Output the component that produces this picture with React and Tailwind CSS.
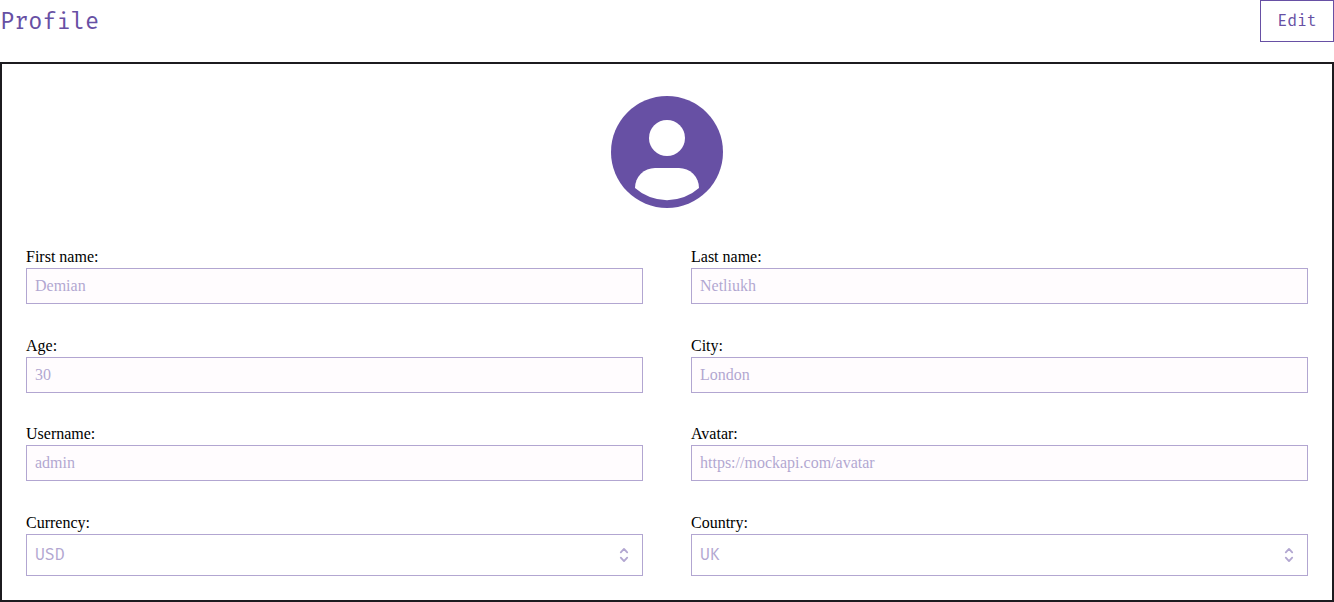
const fields = [
  { id: 'firstName', label: 'First name:', value: 'Demian' },
  { id: 'lastName', label: 'Last name:', value: 'Netliukh' },
  { id: 'age', label: 'Age:', value: '30' },
  { id: 'city', label: 'City:', value: 'London' },
  { id: 'username', label: 'Username:', value: 'admin' },
  { id: 'avatar', label: 'Avatar:', value: 'https://mockapi.com/avatar' },
];

const selects = [
  { id: 'currency', label: 'Currency:', value: 'USD', options: ['USD', 'EUR', 'GBP'] },
  { id: 'country', label: 'Country:', value: 'UK', options: ['UK', 'USA', 'Ukraine'] },
];

function TextField({ id, label, value }) {
  return (
    <div className="flex flex-col gap-0.5">
      <label htmlFor={id} className="leading-[18px]">{label}</label>
      <input
        id={id}
        type="text"
        defaultValue={value}
        disabled
        className="h-9 w-full border border-[#6750a4] bg-[#fffbfe] px-2 text-[#6750a4] opacity-50"
      />
    </div>
  );
}

function SelectField({ id, label, value, options }) {
  return (
    <div className="flex flex-col gap-0.5">
      <label htmlFor={id} className="leading-[18px]">{label}</label>
      <div className="relative text-[#6750a4] opacity-50">
        <select
          id={id}
          defaultValue={value}
          disabled
          className="block h-[42px] w-full appearance-none border border-[#6750a4] bg-transparent px-2 font-['Fira_Code','Fira_Mono','Liberation_Mono',monospace] opacity-100"
        >
          {options.map((option) => (
            <option key={option}>{option}</option>
          ))}
        </select>
        <svg
          viewBox="0 0 20 20"
          fill="none"
          stroke="currentColor"
          strokeWidth="1.8"
          strokeLinecap="round"
          strokeLinejoin="round"
          aria-hidden="true"
          className="pointer-events-none absolute inset-y-0 right-[9px] my-auto size-5"
        >
          <path d="M6.8 7.3 10 3.9l3.2 3.4M13.2 12.7 10 16.1l-3.2-3.4" />
        </svg>
      </div>
    </div>
  );
}

export default function App() {
  return (
    <div className="flex min-h-screen flex-col gap-5 bg-white font-['Liberation_Serif',serif] text-base text-black">
      <header className="flex items-start justify-between font-['Fira_Code','Fira_Mono','Liberation_Mono',monospace] text-[#6750a4]">
        <h1 className="pt-1.5 text-[23px] leading-8">Profile</h1>
        <button type="button" className="h-[42px] min-w-[74px] border border-[#6750a4] px-4">
          Edit
        </button>
      </header>
      <main className="flex flex-1 flex-col gap-10 border-2 border-[#1c1b1f] px-6 pt-8 pb-6">
        <svg viewBox="0 0 112 112" role="img" aria-label="User avatar" className="size-28 self-center">
          <circle cx="56" cy="56" r="56" fill="#6750a4" />
          <circle cx="56" cy="42" r="18" fill="#fff" />
          <path d="M24 92A20 20 0 0 1 44 72H68A20 20 0 0 1 88 92A48 48 0 0 1 24 92Z" fill="#fff" />
        </svg>
        <form className="grid flex-1 grid-cols-2 content-between gap-x-12 gap-y-8">
          {fields.map((field) => (
            <TextField key={field.id} {...field} />
          ))}
          {selects.map((field) => (
            <SelectField key={field.id} {...field} />
          ))}
        </form>
      </main>
    </div>
  );
}
